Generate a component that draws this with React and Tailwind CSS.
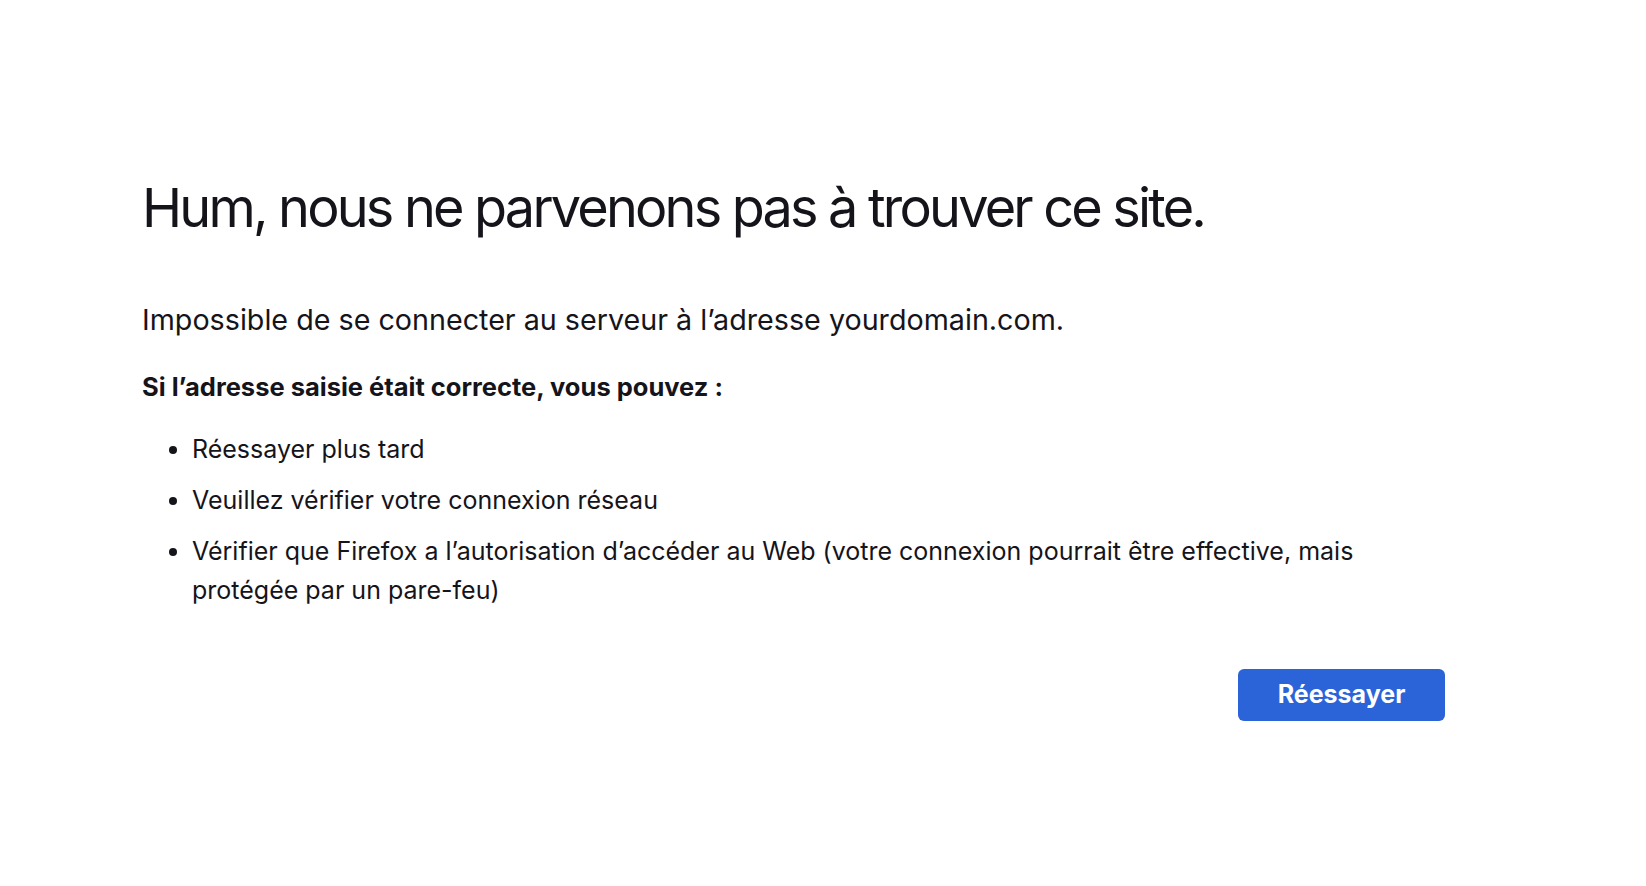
export default function App() {
  const items = [
    'Réessayer plus tard',
    'Veuillez vérifier votre connexion réseau',
    'Vérifier que Firefox a l’autorisation d’accéder au Web (votre connexion pourrait être effective, mais protégée par un pare-feu)',
  ]

  return (
    <div className="min-h-screen bg-white text-[#15141a] font-['Inter',sans-serif]">
      <div className="w-[1303px] pl-[142px] pt-[176px] box-content">
        <h1 className="text-[54px] leading-[64px] font-normal tracking-[-0.052em]">
          Hum, nous ne parvenons pas à trouver ce site.
        </h1>
        <p className="mt-[62px] text-[28.7px] leading-[36px]">
          Impossible de se connecter au serveur à l’adresse yourdomain.com.
        </p>
        <p className="mt-[33px] text-[25.5px] leading-[32px] font-bold">
          Si l’adresse saisie était correcte, vous pouvez :
        </p>
        <ul className="mt-[27px] list-disc pl-[50px] text-[25px] leading-[39px]">
          {items.map((item) => (
            <li key={item} className="mb-[12px] last:mb-0">
              {item}
            </li>
          ))}
        </ul>
        <div className="mt-[59px] flex justify-end">
          <button className="h-[52px] w-[207px] rounded-[6px] bg-[#2b63d9] text-[25px] font-bold text-white">
            Réessayer
          </button>
        </div>
      </div>
    </div>
  )
}
